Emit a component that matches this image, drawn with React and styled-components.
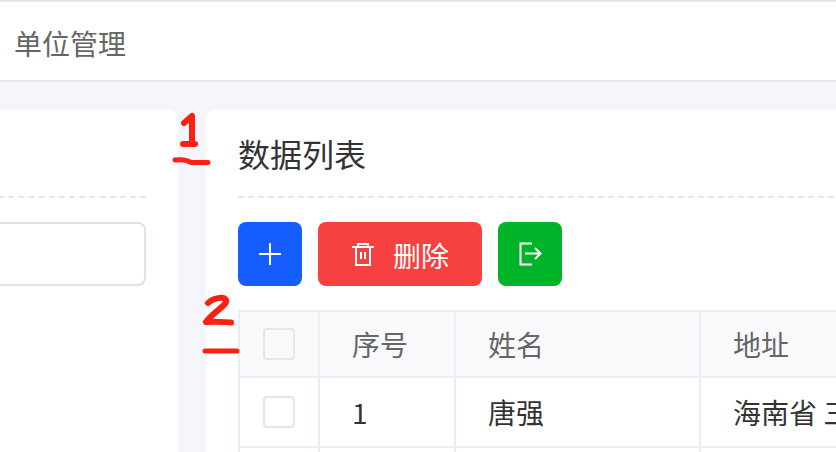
import React from "react";
import styled, { createGlobalStyle } from "styled-components";

const GlobalStyle = createGlobalStyle`
  html, body {
    margin: 0;
    padding: 0;
    width: 836px;
    height: 452px;
    overflow: hidden;
    background: #f5f6fb;
    font-family: "Noto Sans CJK SC", "Liberation Sans", sans-serif;
  }
`;

const Page = styled.div`
  position: relative;
  width: 836px;
  height: 452px;
  overflow: hidden;
  background: #f5f6fb;
`;

const TopBar = styled.header`
  box-sizing: border-box;
  height: 82px;
  display: flex;
  align-items: center;
  padding-left: 14px;
  padding-top: 3px;
  background: #fff;
  border-top: 2px solid #e5e6eb;
  border-bottom: 2px solid #e5e6eb;
  font-size: 28px;
  color: #666;
`;

const Main = styled.main`
  display: flex;
  gap: 28px;
  padding-top: 28px;
  margin-left: -22px;
`;

const Card = styled.section`
  box-sizing: border-box;
  flex: none;
  width: ${(p) => p.$width}px;
  height: 400px;
  padding: 0 32px;
  padding-left: ${(p) => p.$paddingLeft}px;
  background: #fff;
  border-radius: 8px;
`;

const CardHead = styled.div`
  box-sizing: border-box;
  height: 88px;
  display: flex;
  align-items: center;
  border-bottom: 2px dashed #e5e6eb;
  font-size: 32px;
  color: #333;
`;

const SearchInput = styled.div`
  box-sizing: border-box;
  height: 64px;
  margin-top: 24px;
  background: #fff;
  border: 2px solid #dfe1e8;
  border-radius: 8px;
`;

const Toolbar = styled.div`
  display: flex;
  gap: 16px;
  margin-top: 24px;
`;

const Button = styled.button`
  box-sizing: border-box;
  height: 64px;
  width: ${(p) => p.$width}px;
  padding: 0;
  display: flex;
  align-items: center;
  justify-content: center;
  gap: 18px;
  border: 0;
  border-radius: 8px;
  background: ${(p) => p.$color};
  color: #fff;
  font-family: inherit;
  font-size: 28px;
  line-height: 1;
`;

const ButtonLabel = styled.span`
  margin-top: 2px;
`;

const Table = styled.table`
  table-layout: fixed;
  width: 1200px;
  margin-top: 24px;
  border-collapse: separate;
  border-spacing: 0;
  border-top: 2px solid #ebeef5;
  border-left: 2px solid #ebeef5;
  font-size: 28px;
`;

const HeadCell = styled.th`
  box-sizing: border-box;
  height: 66px;
  padding: 0 32px;
  text-align: left;
  font-weight: 400;
  color: #666;
  background: #f9f9fb;
  border-right: 2px solid #ebeef5;
  border-bottom: 2px solid #ebeef5;
  white-space: nowrap;
  overflow: hidden;
`;

const Cell = styled.td`
  box-sizing: border-box;
  height: 70px;
  padding: 0 32px;
  color: #333;
  background: #fff;
  border-right: 2px solid #ebeef5;
  border-bottom: 2px solid #ebeef5;
  white-space: nowrap;
  overflow: hidden;
`;

const CheckCell = styled.div`
  display: flex;
  justify-content: center;
  margin: 0 -32px;
`;

const Checkbox = styled.span`
  box-sizing: border-box;
  display: block;
  width: 32px;
  height: 32px;
  background: ${(p) => (p.$head ? "#f9f9fb" : "#fff")};
  border: 2px solid #e5e6eb;
  border-radius: 4px;
`;

const Scribbles = styled.svg`
  position: absolute;
  left: 0;
  top: 0;
  pointer-events: none;
`;

const Icon = ({ children }) => (
  <svg width="24" height="24" viewBox="0 0 24 24" fill="none" stroke="#fff" strokeWidth="2">
    {children}
  </svg>
);

const columns = [80, 136, 245, 739];

export default function App() {
  return (
    <Page>
      <GlobalStyle />
      <TopBar>单位管理</TopBar>
      <Main>
        <Card $width={200} $paddingLeft={0}>
          <CardHead />
          <SearchInput />
        </Card>
        <Card $width={800} $paddingLeft={32}>
          <CardHead>数据列表</CardHead>
          <Toolbar>
            <Button $width={64} $color="#165dff" aria-label="add">
              <Icon>
                <path d="M1 12h22M12 1v22" />
              </Icon>
            </Button>
            <Button $width={164} $color="#f74141">
              <Icon>
                <path d="M1 5h22M7 5V2h10v3M5 5v18h14V5M10 10v7M14 10v7" />
              </Icon>
              <ButtonLabel>删除</ButtonLabel>
            </Button>
            <Button $width={64} $color="#00b42a" aria-label="export">
              <Icon>
                <path d="M14 1.500H2.500v21H14M7 11.500h15.500M17 6l5.500 5.500L17 17" />
              </Icon>
            </Button>
          </Toolbar>
          <Table>
            <colgroup>
              {columns.map((w) => (
                <col key={w} style={{ width: w }} />
              ))}
            </colgroup>
            <thead>
              <tr>
                <HeadCell>
                  <CheckCell>
                    <Checkbox $head />
                  </CheckCell>
                </HeadCell>
                <HeadCell>序号</HeadCell>
                <HeadCell>姓名</HeadCell>
                <HeadCell>地址</HeadCell>
              </tr>
            </thead>
            <tbody>
              <tr>
                <Cell>
                  <CheckCell>
                    <Checkbox />
                  </CheckCell>
                </Cell>
                <Cell>1</Cell>
                <Cell>唐强</Cell>
                <Cell>海南省 三亚市</Cell>
              </tr>
              <tr>
                <Cell />
                <Cell />
                <Cell />
                <Cell />
              </tr>
            </tbody>
          </Table>
        </Card>
      </Main>
      <Scribbles width="836" height="452" fill="none" stroke="#fb1f14" strokeWidth="6" strokeLinecap="round" strokeLinejoin="round">
        <path d="M184 123 192 116V143M183 144H195" />
        <path d="M175 160C182 159 187 160 191 162.500H208" strokeWidth="5" />
        <path d="M208 303C213 298 224 296 226 300C228 305 213 312 206 322C214 321 222 322 231 322.500" />
        <path d="M205 351H237" strokeWidth="5" />
      </Scribbles>
    </Page>
  );
}
